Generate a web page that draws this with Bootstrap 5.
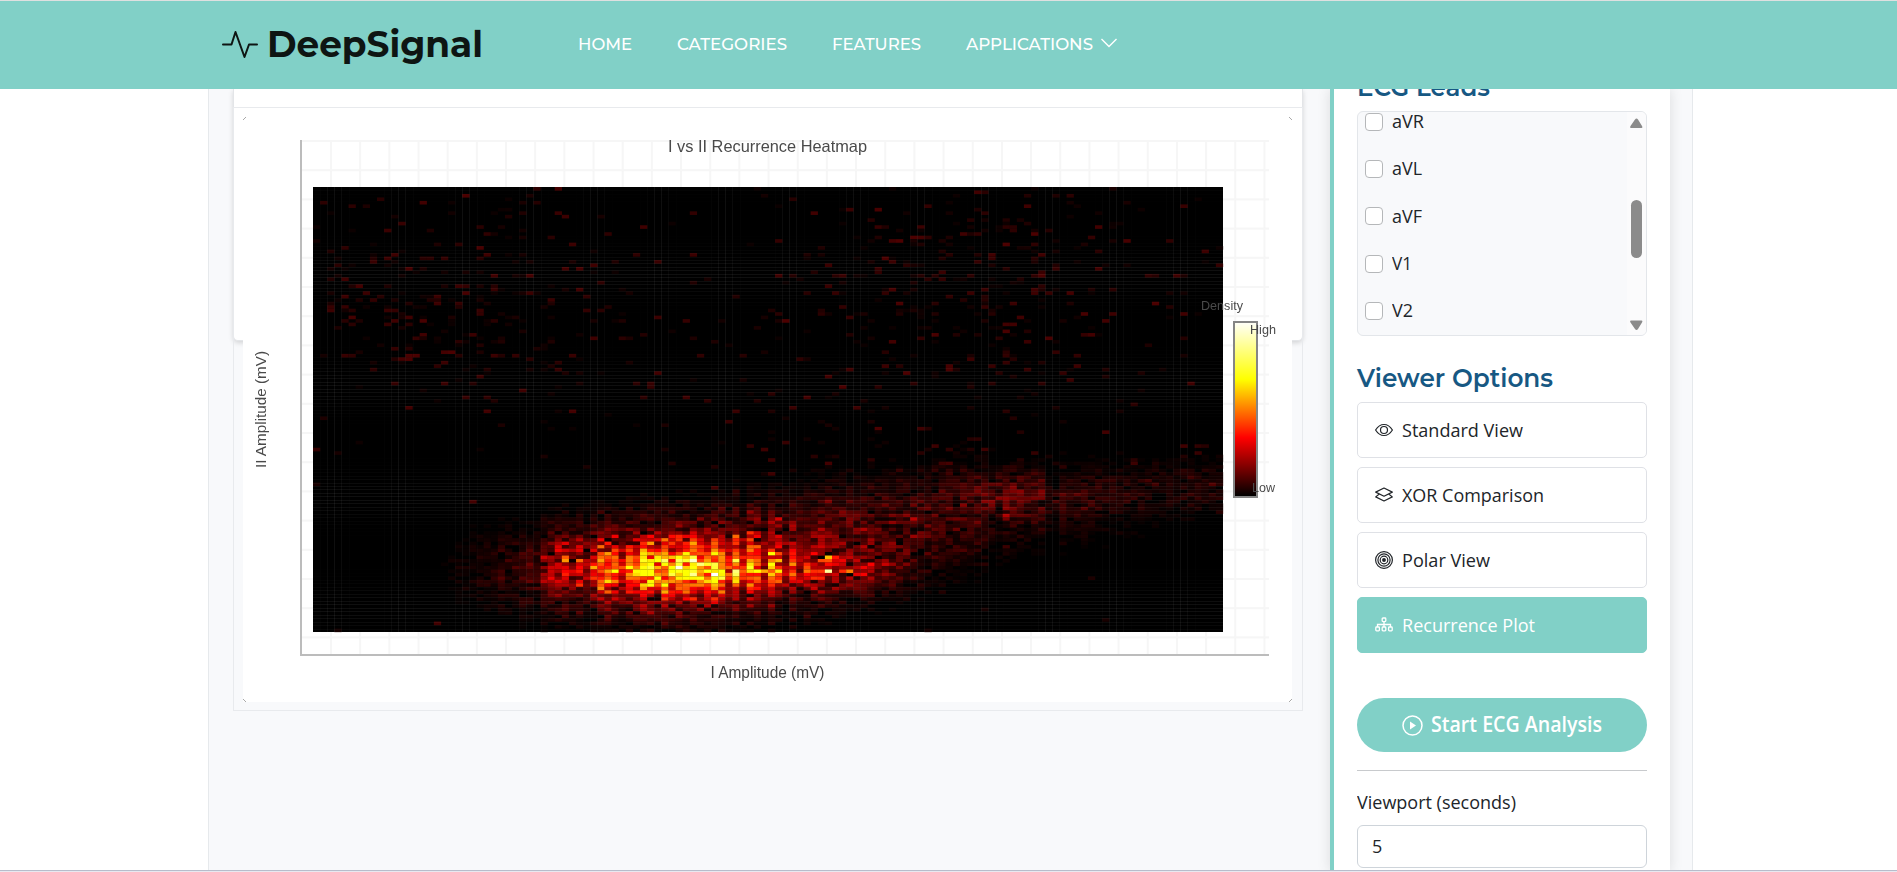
<!DOCTYPE html>
<html lang="en">
<head>
<meta charset="utf-8">
<title>DeepSignal</title>
<link href="https://cdn.jsdelivr.net/npm/bootstrap@5.3.0/dist/css/bootstrap.min.css" rel="stylesheet">
<style>
html,body{height:872px;overflow:hidden}
body{font-family:"Open Sans","Noto Sans",sans-serif;color:#212529;background:#fff;font-size:18px}
.topbar{height:89px;background:#81d0c7;border-top:1px solid #dfe0e0;padding:0 0 0 221px;position:relative;z-index:2}
.brandname{font:700 36px/1 Montserrat,Inter,sans-serif;color:#0e1513;margin:-2px 0 0 8px;white-space:nowrap;width:216px}
.topnav{font:500 16px/1 Montserrat,Inter,sans-serif;color:#fff;margin:0 0 0 95px}
.topnav a{color:#fff;text-decoration:none;white-space:nowrap;display:block}
.page{width:1485px;height:783px;margin-left:208px;background:#f8f9fb;border:solid #e6e9ec;border-width:0 1px}
.plotcol{width:1070px;margin-left:24px;position:relative}
.cardtop{position:absolute;left:0;top:0;width:1070px;height:252px;background:#fff;border:1px solid #e3e5e8;border-top:0;border-radius:0 0 5px 5px;box-shadow:0 2px 5px rgba(0,0,0,.15)}
.plotframe{position:relative;margin-top:18px;height:604px;border:1px solid #e8eaed;padding:9px}
.plotframe canvas,.plotframe svg{position:absolute;left:9px;top:9px;display:block}
.side{width:340px;margin-left:27px;border-left:4px solid #81d0c7;background:#fff;padding:0 23px 0 23px;box-shadow:0 0 13px rgba(0,0,0,.12);overflow:hidden;flex:none}
.side h4{font:600 25px/30px Montserrat,Inter,sans-serif;color:#175883;margin:0;white-space:nowrap}
.leads{height:225px;border:1px solid #e3e6ea;border-radius:6px;background:#f8f9fb;overflow:hidden;margin-top:9px}
.leadrow{height:47.3px}
.box{width:18px;height:18px;border:1px solid #b5b7b9;border-radius:4px;background:#fff;margin:0 9px 0 7px}
.sbar{width:19px;background:#fbfbfc}
.opt{height:56px;border:1px solid #dfe1e6;border-radius:5px;margin-bottom:9px;padding-left:17px;background:#fff}
.opt svg{margin-right:9px}
.opt.on{background:#81d0c7;border-color:#81d0c7;color:#fff}
.start{height:54px;border-radius:27px;background:#81d0c7;color:#fff;font-weight:600;font-size:21px;margin-top:45px}
.rule{height:1px;background:#c8cacd;margin:18px 0 18px}
.field{height:43px;border:1px solid #ced4da;border-radius:6px;padding-left:14px;margin-top:9px}
.edge{position:absolute;left:0;right:0;top:870px;height:2px;background:#b8bccb;border-bottom:1px solid #e8e8f0;z-index:3}
</style>
</head>
<body>
<header class="topbar d-flex align-items-center">
<svg width="38" height="30" viewBox="0 0 38 30" fill="none" stroke="#0e1513" stroke-width="2" stroke-linecap="round" stroke-linejoin="round" style="margin-top:-2px"><path d="M2 15.500H10.500L14.500 3L23.500 28L28 15.500H36"/></svg>
<div class="brandname"><span data-w="216">DeepSignal</span></div>
<nav class="topnav d-flex align-items-center">
<a href="#" style="width:99px"><span data-w="54">HOME</span></a><a href="#" style="width:155px"><span data-w="110">CATEGORIES</span></a><a href="#" style="width:134px"><span data-w="89">FEATURES</span></a><a href="#" class="d-flex"><span data-w="127">APPLICATIONS</span><svg width="18" height="16" viewBox="0 0 18 16" fill="none" stroke="#fff" stroke-width="1.400" style="margin:-1px 0 0 7px"><path d="M1.500 3L9 10.500L16.500 3"/></svg></a>
</nav>
</header>
<main class="page d-flex">
<section class="plotcol flex-shrink-0">
<div class="cardtop"></div>
<div class="plotframe">
<canvas id="heat" width="1049" height="585"></canvas>
<svg width="1049" height="585" font-family="Liberation Sans, Arial, sans-serif" fill="#4a4a4a">
<text x="425" y="35" font-size="16.500" textLength="199" lengthAdjust="spacingAndGlyphs">I vs II Recurrence Heatmap</text>
<text x="467.500" y="561" font-size="16" textLength="114" lengthAdjust="spacingAndGlyphs">I Amplitude (mV)</text>
<text transform="translate(23 351) rotate(-90)" font-size="15" textLength="117" lengthAdjust="spacingAndGlyphs">II Amplitude (mV)</text>
<text x="958" y="193" font-size="13" textLength="42" lengthAdjust="spacingAndGlyphs">Density</text>
<text x="1007" y="216.500" font-size="13" textLength="26" lengthAdjust="spacingAndGlyphs">High</text>
<text x="1009" y="375" font-size="13" textLength="23" lengthAdjust="spacingAndGlyphs">Low</text>
</svg>
</div>
</section>
<aside class="side">
<h4 style="margin-top:-17px"><span data-w="133">ECG Leads</span></h4>
<div class="leads d-flex">
<div class="flex-grow-1" style="margin-top:-14px">
<div class="leadrow d-flex align-items-center"><span class="box"></span><span data-w="32">aVR</span></div>
<div class="leadrow d-flex align-items-center"><span class="box"></span><span data-w="30">aVL</span></div>
<div class="leadrow d-flex align-items-center"><span class="box"></span><span data-w="30">aVF</span></div>
<div class="leadrow d-flex align-items-center"><span class="box"></span><span data-w="20">V1</span></div>
<div class="leadrow d-flex align-items-center"><span class="box"></span><span data-w="21">V2</span></div>
</div>
<svg class="sbar" width="19" height="223" fill="#8b8b8b"><path d="M4 16Q2.500 16 3.500 14L8 7.500Q9.500 5.500 11 7.500L15 14Q16 16 14.500 16ZM4 208.500Q2.500 208.500 3.500 210.500L8 217Q9.500 219 11 217L15 210.500Q16 208.500 14.500 208.500Z"/><rect x="4" y="88" width="11" height="58" rx="5.500"/></svg>
</div>
<h4 style="margin:27px 0 9px"><span data-w="196">Viewer Options</span></h4>
<div class="opt d-flex align-items-center"><svg width="18" height="18" viewBox="0 0 18 18" fill="none" stroke="#212529" stroke-width="1.200"><path d="M.6 9Q4 3.500 9 3.500T17.400 9Q14 14.500 9 14.500T.6 9Z"/><circle cx="9" cy="9" r="3.500"/></svg><span data-w="121">Standard View</span></div>
<div class="opt d-flex align-items-center"><svg width="18" height="18" viewBox="0 0 18 18" fill="none" stroke="#212529" stroke-width="1.200" stroke-linejoin="round"><path d="M9 2L.7 6.100L9 10.200L17.300 6.100ZM4 8.300L.7 10.900L9 15L17.300 10.900L14 8.300"/></svg><span data-w="142">XOR Comparison</span></div>
<div class="opt d-flex align-items-center"><svg width="18" height="18" viewBox="0 0 18 18" fill="none" stroke="#212529" stroke-width="1.200"><circle cx="9" cy="9" r="8.400"/><circle cx="9" cy="9" r="6.100"/><circle cx="9" cy="9" r="3.800"/><circle cx="9" cy="9" r="1.300" fill="#212529"/></svg><span data-w="88">Polar View</span></div>
<div class="opt on d-flex align-items-center"><svg width="18" height="18" viewBox="0 0 18 18" fill="none" stroke="#fff" stroke-width="1.300"><rect x="7.200" y="2" width="3.600" height="3.600" rx=".8"/><path d="M9 5.600V11M2.500 11V8.500H15.500V11"/><rect x=".8" y="11" width="3.600" height="3.800" rx=".8"/><rect x="7.200" y="11" width="3.600" height="3.800" rx=".8"/><rect x="13.600" y="11" width="3.600" height="3.800" rx=".8"/></svg><span data-w="133">Recurrence Plot</span></div>
<div class="start d-flex align-items-center justify-content-center"><svg class="me-2" width="21" height="21" viewBox="0 0 21 21" fill="none" stroke="#fff" stroke-width="1.500"><circle cx="10.500" cy="10.500" r="9.500"/><path d="M8 6.500V14.500L14 10.500Z" fill="#fff" stroke="none"/></svg><span data-w="171">Start ECG Analysis</span></div>
<div class="rule"></div>
<div style="line-height:27px"><span data-w="159">Viewport (seconds)</span></div>
<div class="field d-flex align-items-center">5</div>
</aside>
</main>
<div class="edge"></div>
<script src="https://cdn.jsdelivr.net/npm/bootstrap@5.3.0/dist/js/bootstrap.bundle.min.js"></script>
<script>
// stretch each label to its design width
document.querySelectorAll('[data-w]').forEach(function(e){
  e.style.whiteSpace='nowrap';e.style.display='inline-block';
  var w=e.getBoundingClientRect().width,t=+e.dataset.w;
  e.style.transformOrigin='0 50%';e.style.transform='scaleX('+t/w+')';
  e.style.marginRight=(t-w)+'px';
});
var c=document.getElementById('heat').getContext('2d');
c.fillStyle='#fff';c.fillRect(0,0,1049,585);
c.strokeStyle='#a9a9a9';c.lineWidth=1;
[[0,3,3,0],[1046,0,1049,3],[0,582,3,585],[1046,585,1049,582]].forEach(function(p){c.beginPath();c.moveTo(p[0],p[1]);c.lineTo(p[2],p[3]);c.stroke();});
c.fillStyle='#f6f6f6';
for(var x=87;x<1026;x+=29.17)c.fillRect(x,23,2,515);
for(var y=23;y<538;y+=29.2)c.fillRect(59,y,967,2);
c.fillStyle='#bcbcbc';c.fillRect(57,23,2,516);c.fillRect(57,537,969,2);
var s=12345;
function rnd(){s=(Math.imul(s,1664525)+1013904223)>>>0;return s/4294967296;}
function g(x,y,a,b,u,v){return Math.exp(-((x-a)*(x-a)/u/u+(y-b)*(y-b)/v/v)/2);}
function ramp(t){t=Math.max(0,Math.min(1,t));return 'rgb('+Math.min(255,t*765|0)+','+Math.max(0,Math.min(255,(t-.333)*765|0))+','+Math.max(0,Math.min(255,(t-.75)*1020|0))+')';}
var X=70,Y=70,W=910,H=445,n=128,col=[];
for(var i=0;i<n;i++)col[i]=.86+.28*rnd();
[38,43,58,60,63,66,68].forEach(function(k){col[k]*=.65;});
[40,41,47,49,51,53,56,59,61,64].forEach(function(k){col[k]=1.200;});
c.fillStyle='#000';c.fillRect(X,Y,W,H);
for(i=0;i<n;i++)for(var j=0;j<n;j++){
  var d=.3*g(i,j,52,109.5,11,4)+.33*g(i,j,50,109,14,8.5)+.1*g(i,j,71,109,7,4);
  var mid=i<98?99-(i-60)*.28:88-(i-98)*.08;
  var wid=i<95?8:5.5;
  if(i>50)d+=(i>103?.052:.068)*Math.exp(-Math.pow((j-mid)/wid,2)/2)*Math.min(1,(i-50)/14);
  d+=.04*g(i,j,80,103,11,8)+.045*g(i,j,98,89,5,5)+.022*g(i,j,102,97,12,6);
  if(i<32)d=d*.45*Math.max(0,(i-14)/18)+.035*g(i,j,27,110,6,10);
  if(i>=103&&i<105)d*=.5;
  var q=(rnd()+rnd())/2,t=d*col[i]*(d>.3?.4+1.2*q:-.05+2.05*q);
  if(i>60&&rnd()>.94)t*=1.500;
  var pr=.008+.16*g(i,j,15,34,13,13)+.15*g(i,j,92,28,16,20)+.08*g(i,j,70,68,14,14)+.07*g(i,j,30,48,15,12)+.05*g(i,j,20,10,18,10)+.14*g(i,j,100,80,18,5);
  if(rnd()<pr)t=Math.max(t,.028+.085*Math.pow(rnd(),2));
  t=Math.max(0,t-.012);
  if(t>.01){c.fillStyle=ramp(t);c.fillRect(X+i*W/n,Y+j*H/n,W/n+.15,H/n+.15);}
}
// faint cell seams, fading with the beat between cell size and pixel grid
for(i=1;i<n;i++){var a=.06*Math.pow(.5+.5*Math.cos((i-3)*W/n*Math.PI*2),3);c.fillStyle='rgba(255,255,255,'+a+')';c.fillRect(Math.round(X+i*W/n),Y,1,H);}
for(j=1;j<n;j++){a=.06*Math.pow(.5+.5*Math.cos((j-25)/32*Math.PI*2),2);c.fillStyle='rgba(255,255,255,'+a+')';c.fillRect(X,Math.round(Y+j*H/n),W,1);}
var l=c.createLinearGradient(0,204,0,379);
l.addColorStop(0,'#fff');l.addColorStop(.333,'#ff0');l.addColorStop(.667,'#f00');l.addColorStop(1,'#000');
c.fillStyle=l;c.fillRect(991,205,23,175);c.strokeStyle='#858585';c.lineWidth=2;c.strokeRect(991,205,23,175);
</script>
</body>
</html>
